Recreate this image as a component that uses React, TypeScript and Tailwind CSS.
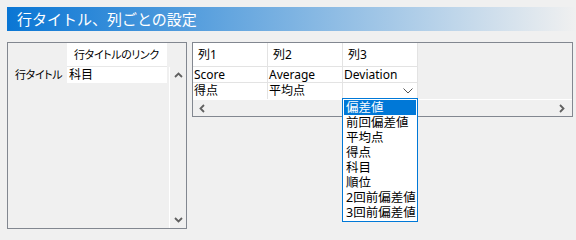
import React from "react";

const Up = () => (
  <svg width="9" height="6" viewBox="0 0 9 6"><polyline points="1,5 4.5,1.5 8,5" fill="none" stroke="#606060" strokeWidth="1.8" /></svg>
);
const Down = () => (
  <svg width="9" height="6" viewBox="0 0 9 6"><polyline points="1,1 4.5,4.5 8,1" fill="none" stroke="#606060" strokeWidth="1.8" /></svg>
);
const Left = () => (
  <svg width="6" height="9" viewBox="0 0 6 9"><polyline points="5,1 1.5,4.5 5,8" fill="none" stroke="#606060" strokeWidth="1.8" /></svg>
);
const Right = () => (
  <svg width="6" height="9" viewBox="0 0 6 9"><polyline points="1,1 4.5,4.5 1,8" fill="none" stroke="#606060" strokeWidth="1.8" /></svg>
);

const items = ["偏差値", "前回偏差値", "平均点", "得点", "科目", "順位", "2回前偏差値", "3回前偏差値"];

export default function App() {
  return (
    <div className="relative w-[576px] h-[240px] overflow-hidden bg-[#f0f0f0] font-['Noto_Sans','Noto_Sans_CJK_JP',sans-serif] text-[12px] leading-[16px] text-black whitespace-nowrap">
      <div className="ml-[7px] mt-[7px] h-[24px] flex items-center pl-[10px] text-white text-[15px] bg-[linear-gradient(to_right,#0a76d4,#f0f0f0)]">
        行タイトル、列ごとの設定
      </div>
      <div className="flex items-start ml-[7px] mt-[11px]">
        {/* left panel */}
        <div className="w-[180px] h-[187px] border border-[#828790] flex flex-col [font-feature-settings:'palt']">
          <div className="flex h-[24px] shrink-0">
            <div className="w-[59px]" />
            <div className="w-[100px] bg-white border-b border-[#e8e8e8] flex items-center pl-[7px] pt-[1px] text-[11px] tracking-[-0.4px]">行タイトルのリンク</div>
          </div>
          <div className="flex flex-1">
            <div className="w-[161px] flex flex-col">
              <div className="flex h-[16px]">
                <div className="w-[59px] pl-[7px] text-[11px] tracking-[-0.4px]">行タイトル</div>
                <div className="w-[100px] bg-white pl-[2px]">科目</div>
              </div>
            </div>
            <div className="w-[17px] border-l border-white flex flex-col items-center justify-between py-[5px]">
              <Up />
              <Down />
            </div>
          </div>
        </div>
        {/* right panel */}
        <div className="ml-[5px] w-[381px] h-[75px] border border-[#828790] flex flex-col">
          <div className="flex h-[24px]">
            {["列1", "列2", "列3"].map((t) => (
              <div key={t} className="w-[75px] bg-white border-r border-b border-[#e3e3e3] flex items-center pl-[5px] pt-[1px]">{t}</div>
            ))}
          </div>
          <div className="flex h-[16px]">
            {["Score", "Average", "Deviation"].map((t) => (
              <div key={t} className="w-[75px] bg-white border-r border-b border-[#e3e3e3] pl-[1px] leading-[15px]">{t}</div>
            ))}
          </div>
          <div className="flex h-[16px]">
            <div className="w-[75px] bg-white border-r border-[#e3e3e3] pl-[1px]">得点</div>
            <div className="w-[75px] bg-white border-r border-[#e3e3e3] pl-[1px]">平均点</div>
            <div className="w-[75px] bg-white border-r border-[#e3e3e3] flex items-center justify-end pr-[4px]">
              <svg width="10" height="6" viewBox="0 0 10 6"><polyline points="0.5,0.5 5,5 9.5,0.5" fill="none" stroke="#555" strokeWidth="1" /></svg>
            </div>
          </div>
          <div className="h-[17px] border-t border-white flex items-center justify-between pl-[6px] pr-[7px]">
            <Left />
            <Right />
          </div>
        </div>
      </div>
      {/* dropdown */}
      <div className="absolute left-[342px] top-[98px] w-[76px] h-[124px] border border-[#0078d7] bg-white p-[1px] text-[12.5px] leading-[15px] overflow-hidden">
        {items.map((t, i) => (
          <div key={t} className={i === 0 ? "h-[15px] bg-[#0078d7] text-white pl-[2px]" : "h-[15px] pl-[2px]"}>{t}</div>
        ))}
      </div>
    </div>
  );
}
